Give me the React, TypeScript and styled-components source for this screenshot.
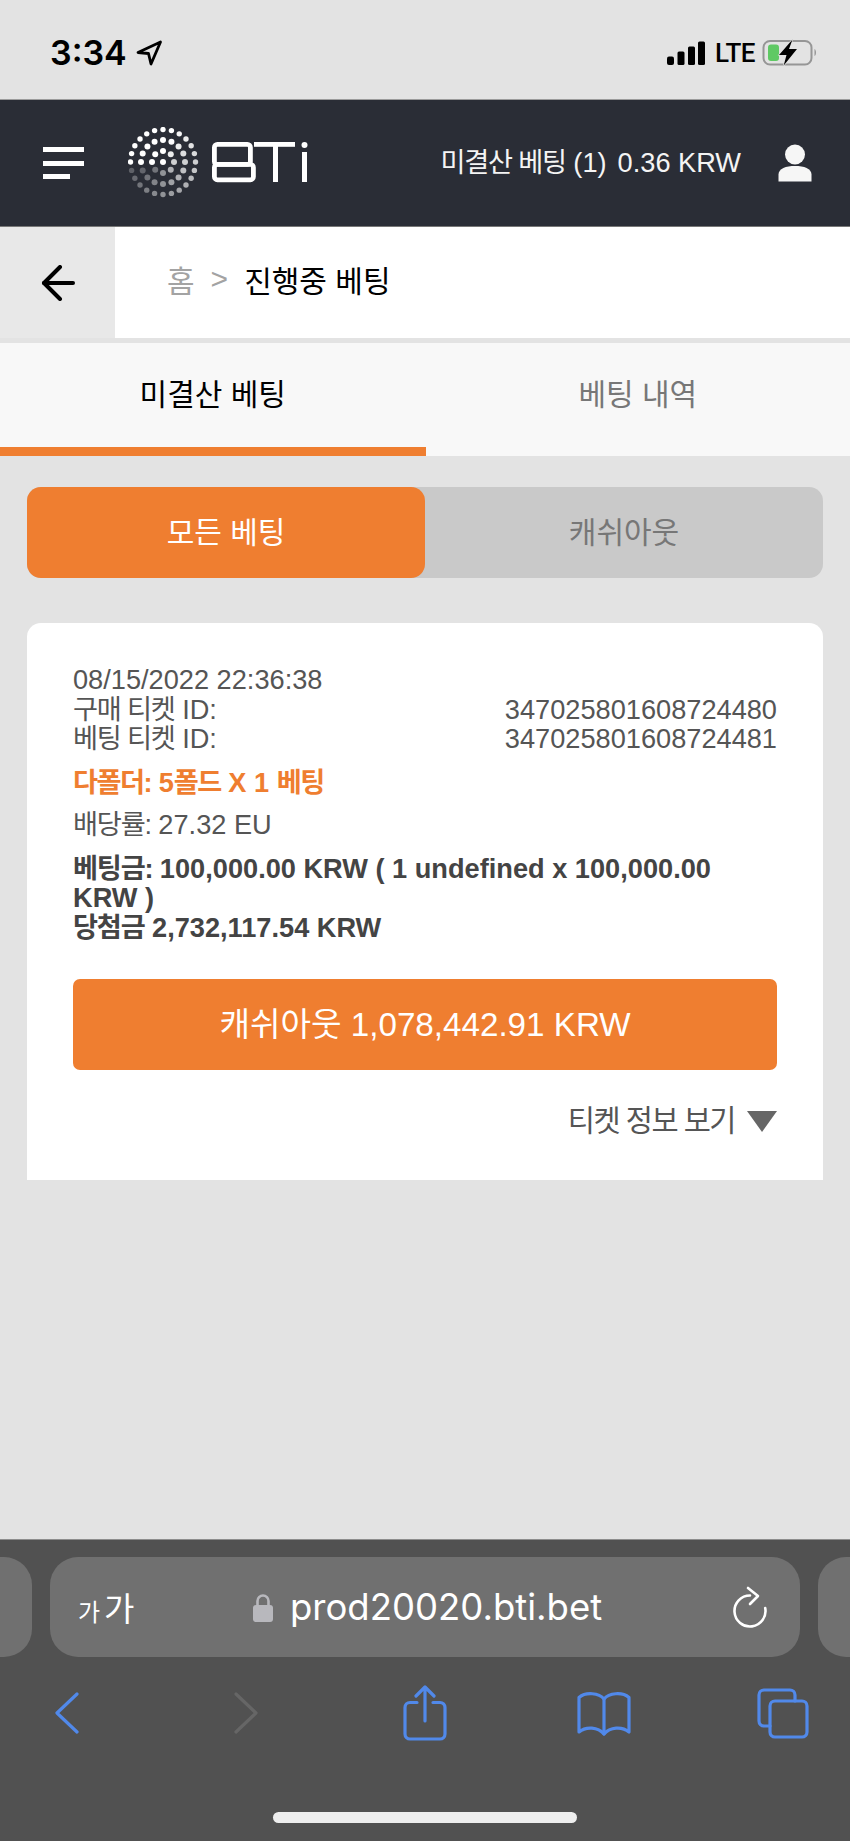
import styled, { createGlobalStyle } from "styled-components";

const GlobalStyle = createGlobalStyle`
  html, body {
    margin: 0;
    padding: 0;
    background: #e3e3e3;
  }
  * {
    box-sizing: border-box;
  }
`;

const WEB_FONT = `"Liberation Sans", "Noto Sans CJK KR", sans-serif`;
const IOS_FONT = `Inter, "Noto Sans CJK KR", sans-serif`;
const ORANGE = "#ef7e30";
const IOS_BLUE = "#5189ea";

const Page = styled.div`
  width: 850px;
  height: 1841px;
  display: flex;
  flex-direction: column;
  overflow: hidden;
  background: #e3e3e3;
  font-family: ${WEB_FONT};
`;

const StatusBar = styled.div`
  height: 99px;
  flex: none;
  display: flex;
  align-items: center;
  justify-content: space-between;
  padding: 6px 32px 0 50px;
  color: #000;
`;

const StatusLeft = styled.div`
  display: flex;
  align-items: center;
  gap: 9px;
`;

const Clock = styled.span`
  font-family: ${IOS_FONT};
  font-size: 34px;
  font-weight: 600;
  line-height: 40px;
`;

const StatusRight = styled.div`
  display: flex;
  align-items: center;
`;

const Network = styled.span`
  font-family: "Roboto", sans-serif;
  font-size: 26px;
  font-weight: 500;
  line-height: 28px;
  width: 38px;
  margin: 0 9px 0 10px;
  letter-spacing: -0.5px;
`;

const Header = styled.header`
  height: 128px;
  flex: none;
  display: flex;
  align-items: center;
  background: #2a2d36;
  border-top: 1px solid #9b9b9b;
  border-bottom: 1px solid #777;
  padding: 0 38px 0 43px;
  color: #f4f4f4;
`;

const Burger = styled.div`
  width: 41px;
  display: flex;
  flex-direction: column;
  gap: 8.6px;
`;

const BurgerBar = styled.span<{ $short?: boolean }>`
  display: block;
  height: 5px;
  width: ${(p) => (p.$short ? "27px" : "41px")};
  background: #fff;
`;

const LogoMark = styled.svg`
  margin-left: 44px;
  flex: none;
`;

const Balance = styled.div`
  margin-left: auto;
  display: flex;
  gap: 11px;
  font-size: 27.2px;
  line-height: 32px;
  margin-right: 37px;
`;

// hangul runs narrower in the reference's font than in Noto
const Ko = styled.span<{ $tight?: boolean }>`
  display: inline-block;
  letter-spacing: ${(p) => (p.$tight ? "-1.5px" : "-1.2px")};
`;

const Crumbs = styled.nav`
  height: 111px;
  flex: none;
  display: flex;
  background: #fff;
`;

const BackBox = styled.div`
  width: 115px;
  display: flex;
  align-items: center;
  justify-content: center;
  background: #e8e8e8;
`;

const CrumbTrail = styled.div`
  display: flex;
  align-items: center;
  gap: 16px;
  padding: 0 0 7px 52px;
  font-size: 30px;
  color: #000;
`;

const CrumbMuted = styled.span`
  color: #a3a3a3;
`;

const Tabs = styled.div`
  height: 113px;
  flex: none;
  margin-top: 5px;
  display: flex;
  background: #f8f8f8;
`;

const Tab = styled.div<{ $active?: boolean }>`
  width: ${(p) => (p.$active ? "425.5px" : "424.5px")};
  display: flex;
  align-items: center;
  justify-content: center;
  padding-bottom: 6px;
  font-size: 30px;
  color: ${(p) => (p.$active ? "#000" : "#777")};
  border-bottom: 9px solid ${(p) => (p.$active ? ORANGE : "transparent")};
`;

const Content = styled.main`
  flex: 1;
  padding: 31px 27px 0;
`;

const Segment = styled.div`
  height: 91px;
  display: flex;
  background: #c9c9c9;
  border-radius: 14px;
`;

const SegmentItem = styled.div<{ $active?: boolean }>`
  flex: 1;
  display: flex;
  align-items: center;
  justify-content: center;
  padding-bottom: 5px;
  font-size: 30px;
  border-radius: 14px;
  background: ${(p) => (p.$active ? ORANGE : "transparent")};
  color: ${(p) => (p.$active ? "#fff" : "#777")};
`;

const Card = styled.section`
  margin-top: 45px;
  height: 557px;
  padding: 42px 46px 0;
  background: #fff;
  border-radius: 14px 14px 0 0;
  font-size: 27.2px;
  line-height: 29.5px;
  color: #555;
`;

const MetaRow = styled.div`
  display: flex;
  justify-content: space-between;
`;

const FoldTitle = styled.div`
  margin-top: 14px;
  font-weight: 700;
  color: ${ORANGE};
`;

const Odds = styled.div`
  margin-top: 13px;
`;

const Stake = styled.div`
  margin-top: 14px;
  font-weight: 700;
  color: #444;
`;

const CashoutButton = styled.div`
  margin-top: 37px;
  height: 91px;
  display: flex;
  align-items: center;
  justify-content: center;
  border-radius: 7px;
  background: ${ORANGE};
  color: #fff;
  font-size: 33.2px;
`;

const TicketToggle = styled.div`
  margin-top: 33px;
  display: flex;
  align-items: center;
  justify-content: flex-end;
  gap: 12px;
  font-size: 29.5px;
  line-height: 36px;
  color: #555;
`;

const TriangleDown = styled.span`
  width: 0;
  height: 0;
  border-left: 15px solid transparent;
  border-right: 15px solid transparent;
  border-top: 21px solid #666;
`;

const BrowserBar = styled.footer`
  height: 302px;
  flex: none;
  display: flex;
  flex-direction: column;
  background: #515151;
  border-top: 1px solid #8d8d8d;
  padding-top: 17px;
  color: #fff;
`;

const AddressRow = styled.div`
  display: flex;
  gap: 18px;
  height: 100px;
  flex: none;
`;

const SideTab = styled.div<{ $side: "left" | "right" }>`
  width: 32px;
  background: #707070;
  border-radius: ${(p) => (p.$side === "left" ? "0 28px 28px 0" : "28px 0 0 28px")};
`;

const AddressPill = styled.div`
  width: 750px;
  display: flex;
  align-items: center;
  padding: 0 33px 0 28px;
  background: #707070;
  border-radius: 28px;
`;

const TextSize = styled.div`
  display: flex;
  align-items: baseline;
  gap: 4px;
  width: 175px;
  font-family: "Noto Sans CJK KR", sans-serif;
  line-height: 1;
`;

const TextSizeGlyph = styled.span<{ $big?: boolean }>`
  font-size: ${(p) => (p.$big ? "33px" : "24px")};
`;

const Url = styled.div`
  flex: 1;
  display: flex;
  align-items: center;
  gap: 17px;
  font-family: ${IOS_FONT};
  font-size: 36.5px;
  font-weight: 400;
  line-height: 44px;
`;

const Toolbar = styled.div`
  display: grid;
  grid-template-columns: repeat(5, 179px);
  justify-content: center;
  justify-items: center;
  align-items: center;
  height: 56px;
  margin-top: 28px;
`;

const HomeIndicator = styled.div`
  width: 304px;
  height: 11px;
  margin: 71px auto 0;
  border-radius: 6px;
  background: #eee;
`;

// logo dots: three rings and a centre dot, fading clockwise from the left
const ringDots = (radius: number, count: number, size: number) =>
  Array.from({ length: count }, (_, i) => {
    const t = i / count;
    const angle = Math.PI + t * Math.PI * 2;
    const opacity = t < 0.3 ? 1 : 1 - ((t - 0.3) / 0.7) * 0.8;
    return {
      cx: 35 + Math.cos(angle) * radius,
      cy: 35 + Math.sin(angle) * radius,
      r: size,
      opacity,
    };
  });

const LOGO_DOTS = [
  { cx: 35, cy: 35, r: 3, opacity: 1 },
  ...ringDots(11, 8, 3),
  ...ringDots(22, 16, 3),
  ...ringDots(32.5, 24, 2.7),
];

const Logo = () => (
  <LogoMark width="182" height="72" viewBox="0 0 182 72" role="img" aria-label="BTi">
    {LOGO_DOTS.map((d, i) => (
      <circle key={i} cx={d.cx} cy={d.cy} r={d.r} fill="#fff" opacity={d.opacity} />
    ))}
    <g fill="none" stroke="#fff" strokeWidth="4.8">
      <rect x="86.4" y="17.4" width="36" height="20" rx="3" />
      <rect x="86.4" y="37.4" width="39" height="15.4" rx="3" />
    </g>
    <g fill="#fff">
      <rect x="126" y="15" width="41" height="4.8" />
      <rect x="145" y="15" width="5" height="40" />
      <rect x="174" y="25" width="5" height="30" />
      <circle cx="176.5" cy="18" r="3" />
    </g>
  </LogoMark>
);

const LocationIcon = () => (
  <svg width="27" height="26" viewBox="0 0 27 26" fill="none">
    <path d="M2 12.5 L24.5 2 L15 24 L12.5 13.5 Z" stroke="#000" strokeWidth="2.8" strokeLinejoin="round" />
  </svg>
);

const SignalIcon = () => (
  <svg width="38" height="24" viewBox="0 0 38 24" fill="#000">
    <rect x="0" y="15.5" width="7" height="8.5" rx="2" />
    <rect x="10.5" y="10.5" width="7" height="13.5" rx="1.5" />
    <rect x="21" y="5.5" width="7" height="18.5" rx="1.5" />
    <rect x="31" y="0.5" width="7" height="23.5" rx="1.5" />
  </svg>
);

const BatteryIcon = () => (
  <svg width="56" height="29" viewBox="0 0 56 29" fill="none">
    <rect x="1.5" y="3" width="48" height="23.5" rx="6.5" stroke="#969696" strokeWidth="2" />
    <path d="M52.5 11 C54.5 12 54.5 17 52.5 18 Z" fill="#969696" />
    <rect x="6" y="6.5" width="11" height="16.5" rx="3" fill="#5fc964" />
    <path
      d="M30.5 1.5 L17 17 H24.5 L21.7 27.5 L35 11 H27 Z"
      fill="#000"
      stroke="#e3e3e3"
      strokeWidth="1.2"
      paintOrder="stroke"
    />
  </svg>
);

const UserIcon = () => (
  <svg width="34" height="38" viewBox="0 0 34 38" fill="#f6f6f6">
    <circle cx="17" cy="10.5" r="10" />
    <path d="M0.5 37.5 V30.5 C0.5 24.5 8 22 17 22 S33.5 24.5 33.5 30.5 V37.5 Z" />
  </svg>
);

const BackArrow = () => (
  <svg width="34" height="36" viewBox="0 0 34 36" fill="none" stroke="#000" strokeWidth="4" strokeLinecap="round">
    <path d="M19 2 L3 18 L19 34" strokeLinejoin="round" />
    <path d="M3 18 H32" />
  </svg>
);

const LockIcon = () => (
  <svg width="20" height="29" viewBox="0 0 20 29" fill="none">
    <path d="M4.5 14 V8 a5.5 5.5 0 0 1 11 0 V14" stroke="#b8b8bd" strokeWidth="2.6" />
    <rect x="0" y="12" width="20" height="17" rx="3" fill="#b8b8bd" />
  </svg>
);

const ReloadIcon = () => (
  <svg width="34" height="42" viewBox="0 0 34 42" fill="none" stroke="#fff" strokeWidth="2.6" strokeLinecap="round" strokeLinejoin="round">
    <path d="M17 9.5 A15.5 15.5 0 1 0 32.2 22" />
    <path d="M15 2 L25 10 L17 18" />
  </svg>
);

const ChevronIcon = ({ dir, color }: { dir: "left" | "right"; color: string }) => (
  <svg width="24" height="42" viewBox="0 0 24 42" fill="none" stroke={color} strokeWidth="3.2" strokeLinecap="round" strokeLinejoin="round">
    <path d={dir === "left" ? "M22 2 L2 21 L22 40" : "M2 2 L22 21 L2 40"} />
  </svg>
);

const ShareIcon = () => (
  <svg width="44" height="56" viewBox="0 0 44 56" fill="none" stroke={IOS_BLUE} strokeWidth="3.2" strokeLinecap="round" strokeLinejoin="round">
    <path d="M14 17.5 H7 a5 5 0 0 0 -5 5 V49 a5 5 0 0 0 5 5 H37 a5 5 0 0 0 5 -5 V22.5 a5 5 0 0 0 -5 -5 H30" />
    <path d="M22 36 V2 M13 11 L22 2 L31 11" />
  </svg>
);

const BookIcon = () => (
  <svg width="54" height="45" viewBox="0 0 54 45" fill="none" stroke={IOS_BLUE} strokeWidth="3.2" strokeLinecap="round" strokeLinejoin="round">
    <path d="M27 8 C22 2 9 0.5 2 6.5 V41 C9 35 21 36 27 43 C33 36 45 35 52 41 V6.5 C45 0.5 32 2 27 8 Z" />
    <path d="M27 8 V43" />
  </svg>
);

const TabsIcon = () => (
  <svg width="52" height="51" viewBox="0 0 52 51" fill="none" stroke={IOS_BLUE} strokeWidth="3.2" strokeLinecap="round" strokeLinejoin="round">
    <path d="M13 38 H7 a5 5 0 0 1 -5 -5 V7 a5 5 0 0 1 5 -5 H33 a5 5 0 0 1 5 5 V13" />
    <rect x="13" y="13" width="37" height="36" rx="5" />
  </svg>
);

const App = () => {
  return (
    <Page>
      <GlobalStyle />
      <StatusBar>
        <StatusLeft>
          <Clock>3:34</Clock>
          <LocationIcon />
        </StatusLeft>
        <StatusRight>
          <SignalIcon />
          <Network>LTE</Network>
          <BatteryIcon />
        </StatusRight>
      </StatusBar>

      <Header>
        <Burger>
          <BurgerBar />
          <BurgerBar />
          <BurgerBar $short />
        </Burger>
        <Logo />
        <Balance>
          <span>
            <Ko>미결산 베팅</Ko> (1)
          </span>
          <span>0.36 KRW</span>
        </Balance>
        <UserIcon />
      </Header>

      <Crumbs>
        <BackBox>
          <BackArrow />
        </BackBox>
        <CrumbTrail>
          <CrumbMuted>홈</CrumbMuted>
          <CrumbMuted>&gt;</CrumbMuted>
          <span>진행중 베팅</span>
        </CrumbTrail>
      </Crumbs>

      <Tabs>
        <Tab $active>미결산 베팅</Tab>
        <Tab>베팅 내역</Tab>
      </Tabs>

      <Content>
        <Segment>
          <SegmentItem $active>모든 베팅</SegmentItem>
          <SegmentItem>캐쉬아웃</SegmentItem>
        </Segment>

        <Card>
          <div>08/15/2022 22:36:38</div>
          <MetaRow>
            <span>
              <Ko>구매 티켓</Ko> ID:
            </span>
            <span>347025801608724480</span>
          </MetaRow>
          <MetaRow>
            <span>
              <Ko>베팅 티켓</Ko> ID:
            </span>
            <span>347025801608724481</span>
          </MetaRow>
          <FoldTitle>
            <Ko $tight>다폴더:</Ko> 5<Ko $tight>폴드</Ko> X 1 <Ko $tight>베팅</Ko>
          </FoldTitle>
          <Odds>
            <Ko>배당률:</Ko> 27.32 EU
          </Odds>
          <Stake>
            <div>
              <Ko>베팅금:</Ko> 100,000.00 KRW ( 1 undefined x 100,000.00 KRW )
            </div>
            <div>
              <Ko>당첨금</Ko> 2,732,117.54 KRW
            </div>
          </Stake>
          <CashoutButton>캐쉬아웃 1,078,442.91 KRW</CashoutButton>
          <TicketToggle>
            <Ko $tight>티켓 정보 보기</Ko>
            <TriangleDown />
          </TicketToggle>
        </Card>
      </Content>

      <BrowserBar>
        <AddressRow>
          <SideTab $side="left" />
          <AddressPill>
            <TextSize>
              <TextSizeGlyph>가</TextSizeGlyph>
              <TextSizeGlyph $big>가</TextSizeGlyph>
            </TextSize>
            <Url>
              <LockIcon />
              <span>prod20020.bti.bet</span>
            </Url>
            <ReloadIcon />
          </AddressPill>
          <SideTab $side="right" />
        </AddressRow>
        <Toolbar>
          <ChevronIcon dir="left" color={IOS_BLUE} />
          <ChevronIcon dir="right" color="#666" />
          <ShareIcon />
          <BookIcon />
          <TabsIcon />
        </Toolbar>
        <HomeIndicator />
      </BrowserBar>
    </Page>
  );
};

export default App;
